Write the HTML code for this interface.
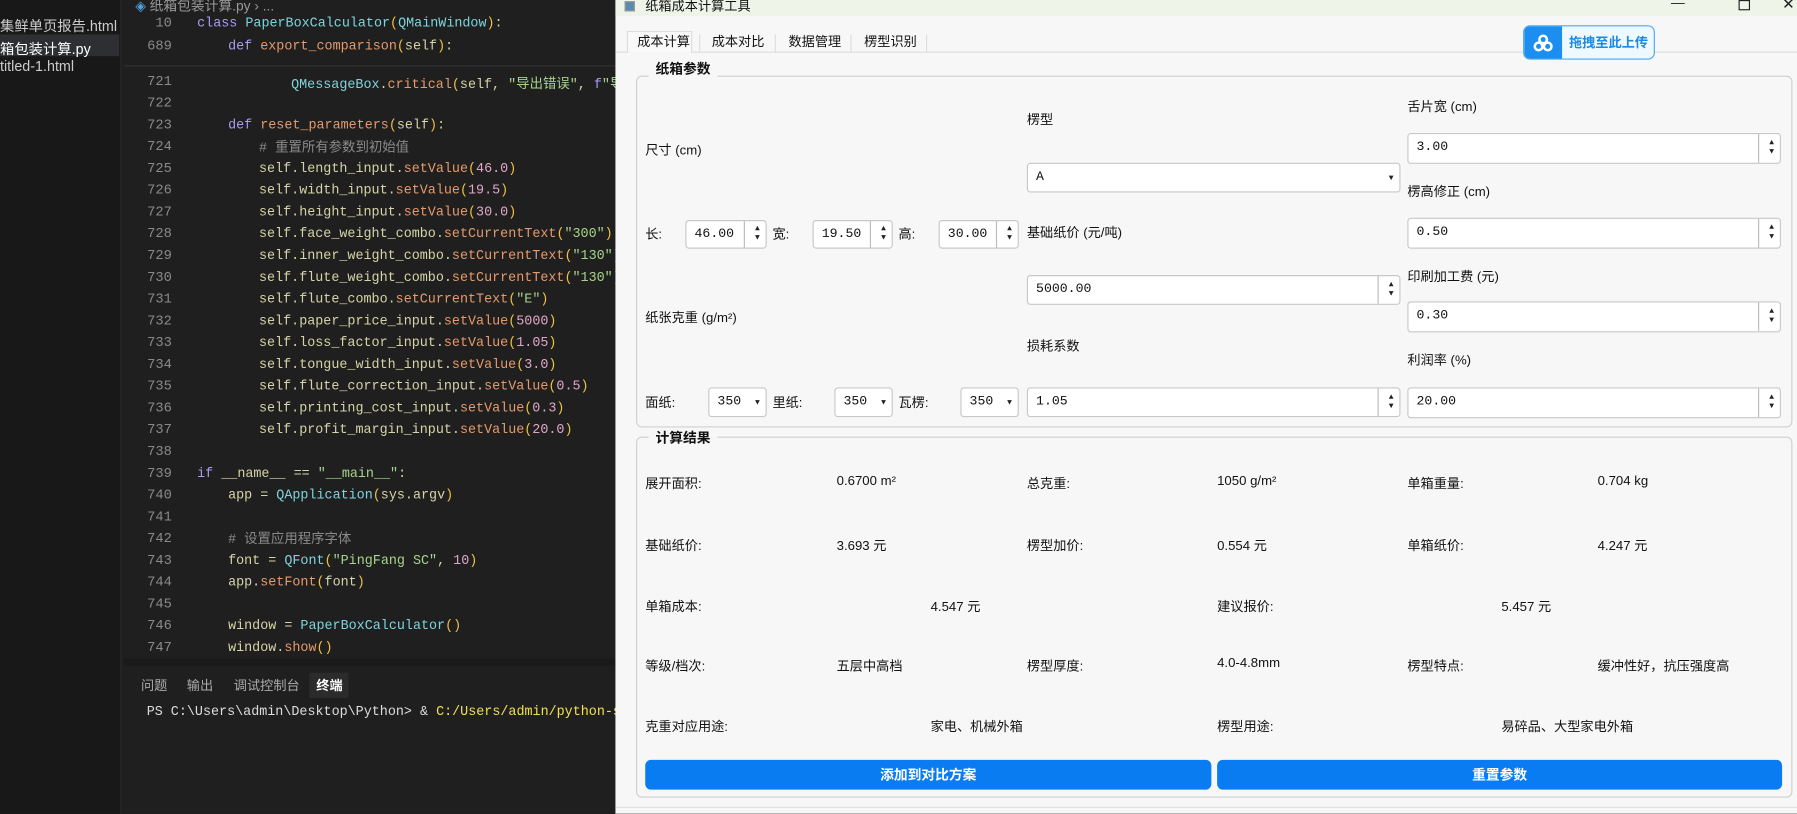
<!DOCTYPE html>
<html><head><meta charset="utf-8">
<style>
*{margin:0;padding:0;box-sizing:border-box}
html,body{width:1797px;height:814px;overflow:hidden;background:#1f1f1f}
#w{position:absolute;left:0;top:0;width:1568px;height:710px;transform:scale(1.14605);transform-origin:0 0;font-family:"Liberation Sans","Noto Sans CJK SC",sans-serif}
.a{position:absolute;white-space:nowrap}
#side{left:0;top:0;width:106px;height:710px;background:#181818;border-right:1px solid #2a2a2a}
.sf{font-size:12.5px;color:#cccccc;left:0}
#ed{left:106px;top:0;width:431px;height:710px;background:#1f1f1f}
.ln{font-family:"Liberation Mono",monospace;font-size:12px;color:#8a8a8a;width:44px;text-align:right;left:106px}
.cd{font-family:"Liberation Mono","Noto Sans CJK SC",monospace;font-size:11.7px;color:#d4d4a8}
.k{color:#a99cf0}.c{color:#7fd4dc}.f{color:#e49a6c}.s{color:#a6d48a}.n{color:#e0a6c8}.p{color:#f0c040}.m{color:#8a8a8a}.v{color:#dcd89c}
#win{left:537px;top:0;width:1031px;height:710px;background:#f7f7f7}
.lb{font-size:11.5px;color:#111;font-family:"Liberation Sans","Noto Sans CJK SC",sans-serif}
.bx{position:absolute;background:#fff;border:1px solid #c8c8c8;border-radius:3px;font-family:"Liberation Mono",monospace;font-size:11.5px;color:#111;padding-left:7px;line-height:24px}
.sp::after{content:"";position:absolute;right:0;top:0;width:18px;height:100%;border-left:1px solid #bbb}
.ar{position:absolute;right:5px;font-size:7px;color:#222;line-height:8px}
.grp{position:absolute;border:1px solid #cfcfcf;border-radius:5px}
.gt{position:absolute;background:#f7f7f7;font-weight:bold;font-size:12px;padding:0 6px;color:#111}
.btn{position:absolute;background:#0a7cf2;border-radius:5px;color:#fff;font-weight:bold;font-size:12px;text-align:center;line-height:26px}
.tt{font-size:11.5px;color:#aaa;top:590px}
</style></head><body><div id="w">
<div id="side" class="a"></div>
<div class="a sf" style="top:12px">集鲜单页报告.html</div>
<div class="a" style="left:0;top:30px;width:104px;height:19px;background:#2e2f32"></div>
<div class="a sf" style="top:32px;color:#fff">箱包装计算.py</div>
<div class="a sf" style="top:51px">titled-1.html</div>
<div id="ed" class="a"></div>
<div class="a" style="left:118px;top:-4px;font-size:12px;color:#999"><span style="color:#4aa0e0">◈</span> 纸箱包装计算.py › ...</div>
<div class="a" style="left:108px;top:57px;width:429px;height:1px;background:#333"></div>
<div class="a" style="left:108px;top:575px;width:429px;height:6px;background:#1a1a1a"></div>

<div class="a ln" style="top:13px">10</div><div class="a cd" style="left:172px;top:13px"><span class="k">class</span> <span class="c">PaperBoxCalculator</span><span class="p">(</span><span class="c">QMainWindow</span><span class="p">)</span>:</div>
<div class="a ln" style="top:33px">689</div><div class="a cd" style="left:199px;top:33px"><span class="k">def</span> <span class="f">export_comparison</span><span class="p">(</span>self<span class="p">)</span>:</div>
<div class="a ln" style="top:64px">721</div><div class="a cd" style="left:254px;top:64px"><span class="c">QMessageBox</span>.<span class="f">critical</span><span class="p">(</span>self, <span class="s">"导出错误"</span>, <span class="k">f</span><span class="s">"导</span></div>
<div class="a ln" style="top:83px">722</div>
<div class="a ln" style="top:102px">723</div><div class="a cd" style="left:199px;top:102px"><span class="k">def</span> <span class="f">reset_parameters</span><span class="p">(</span>self<span class="p">)</span>:</div>
<div class="a ln" style="top:121px">724</div><div class="a cd m" style="left:226px;top:119px"># 重置所有参数到初始值</div>
<div class="a ln" style="top:140px">725</div><div class="a cd" style="left:226px;top:140px">self.length_input.<span class="f">setValue</span><span class="p">(</span><span class="n">46.0</span><span class="p">)</span></div>
<div class="a ln" style="top:159px">726</div><div class="a cd" style="left:226px;top:159px">self.width_input.<span class="f">setValue</span><span class="p">(</span><span class="n">19.5</span><span class="p">)</span></div>
<div class="a ln" style="top:178px">727</div><div class="a cd" style="left:226px;top:178px">self.height_input.<span class="f">setValue</span><span class="p">(</span><span class="n">30.0</span><span class="p">)</span></div>
<div class="a ln" style="top:197px">728</div><div class="a cd" style="left:226px;top:197px">self.face_weight_combo.<span class="f">setCurrentText</span><span class="p">(</span><span class="s">"300"</span><span class="p">)</span></div>
<div class="a ln" style="top:216px">729</div><div class="a cd" style="left:226px;top:216px">self.inner_weight_combo.<span class="f">setCurrentText</span><span class="p">(</span><span class="s">"130"</span><span class="p">)</span></div>
<div class="a ln" style="top:235px">730</div><div class="a cd" style="left:226px;top:235px">self.flute_weight_combo.<span class="f">setCurrentText</span><span class="p">(</span><span class="s">"130"</span><span class="p">)</span></div>
<div class="a ln" style="top:254px">731</div><div class="a cd" style="left:226px;top:254px">self.flute_combo.<span class="f">setCurrentText</span><span class="p">(</span><span class="s">"E"</span><span class="p">)</span></div>
<div class="a ln" style="top:273px">732</div><div class="a cd" style="left:226px;top:273px">self.paper_price_input.<span class="f">setValue</span><span class="p">(</span><span class="n">5000</span><span class="p">)</span></div>
<div class="a ln" style="top:292px">733</div><div class="a cd" style="left:226px;top:292px">self.loss_factor_input.<span class="f">setValue</span><span class="p">(</span><span class="n">1.05</span><span class="p">)</span></div>
<div class="a ln" style="top:311px">734</div><div class="a cd" style="left:226px;top:311px">self.tongue_width_input.<span class="f">setValue</span><span class="p">(</span><span class="n">3.0</span><span class="p">)</span></div>
<div class="a ln" style="top:330px">735</div><div class="a cd" style="left:226px;top:330px">self.flute_correction_input.<span class="f">setValue</span><span class="p">(</span><span class="n">0.5</span><span class="p">)</span></div>
<div class="a ln" style="top:349px">736</div><div class="a cd" style="left:226px;top:349px">self.printing_cost_input.<span class="f">setValue</span><span class="p">(</span><span class="n">0.3</span><span class="p">)</span></div>
<div class="a ln" style="top:368px">737</div><div class="a cd" style="left:226px;top:368px">self.profit_margin_input.<span class="f">setValue</span><span class="p">(</span><span class="n">20.0</span><span class="p">)</span></div>
<div class="a ln" style="top:387px">738</div>
<div class="a ln" style="top:406px">739</div><div class="a cd" style="left:172px;top:406px"><span class="k">if</span> __name__ == <span class="s">"__main__"</span>:</div>
<div class="a ln" style="top:425px">740</div><div class="a cd" style="left:199px;top:425px">app = <span class="c">QApplication</span><span class="p">(</span>sys.argv<span class="p">)</span></div>
<div class="a ln" style="top:444px">741</div>
<div class="a ln" style="top:463px">742</div><div class="a cd m" style="left:199px;top:461px"># 设置应用程序字体</div>
<div class="a ln" style="top:482px">743</div><div class="a cd" style="left:199px;top:482px">font = <span class="c">QFont</span><span class="p">(</span><span class="s">"PingFang SC"</span>, <span class="n">10</span><span class="p">)</span></div>
<div class="a ln" style="top:501px">744</div><div class="a cd" style="left:199px;top:501px">app.<span class="f">setFont</span><span class="p">(</span>font<span class="p">)</span></div>
<div class="a ln" style="top:520px">745</div>
<div class="a ln" style="top:539px">746</div><div class="a cd" style="left:199px;top:539px">window = <span class="c">PaperBoxCalculator</span><span class="p">()</span></div>
<div class="a ln" style="top:558px">747</div><div class="a cd" style="left:199px;top:558px">window.<span class="f">show</span><span class="p">()</span></div>
<div class="a" style="left:270px;top:587px;width:34px;height:22px;background:#2b2b2b"></div>
<div class="a tt" style="left:123px">问题</div>
<div class="a tt" style="left:163px">输出</div>
<div class="a tt" style="left:204px">调试控制台</div>
<div class="a tt" style="left:276px;color:#fff;font-weight:bold">终端</div>
<div class="a cd" style="left:128px;top:614px;color:#ddd">PS C:\Users\admin\Desktop\Python&gt; &amp; <span style="color:#f0e050">C:/Users/admin/python-s</span></div>

<div id="win" class="a"></div>
<div class="a" style="left:537px;top:0;width:1031px;height:14px;background:#eef4e8"></div>
<div class="a" style="left:545px;top:1px;width:9px;height:9px;background:#5a8ab0;border:1px solid #999"></div>
<div class="a lb" style="left:563px;top:-3px">纸箱成本计算工具</div>
<div class="a" style="left:1458px;top:-5px;font-size:12px;color:#222">—</div>
<div class="a" style="left:1517px;top:0;width:10px;height:9px;border:1.5px solid #222"></div>
<div class="a" style="left:1555px;top:-4px;font-size:13px;color:#222">✕</div>
<div class="a" style="left:537px;top:45px;width:1031px;height:1px;background:#ddd"></div>
<div class="a" style="left:547px;top:27px;width:57px;height:19px;background:#f9f9f9;border:1px solid #ddd;border-bottom:none"></div>
<div class="a lb" style="left:556px;top:28px">成本计算</div>
<div class="a lb" style="left:621px;top:28px">成本对比</div>
<div class="a lb" style="left:688px;top:28px">数据管理</div>
<div class="a lb" style="left:754px;top:28px">楞型识别</div>
<div class="a" style="left:610px;top:30px;width:1px;height:16px;background:#ddd"></div>
<div class="a" style="left:676px;top:30px;width:1px;height:16px;background:#ddd"></div>
<div class="a" style="left:742px;top:30px;width:1px;height:16px;background:#ddd"></div>
<div class="a" style="left:808px;top:30px;width:1px;height:16px;background:#ddd"></div>
<div class="a" style="left:1329px;top:22px;width:115px;height:30px;border:1px solid #4aa8ec;border-radius:6px;background:#eef8ff;overflow:hidden">
<div class="a" style="left:0;top:0;width:33px;height:30px;background:#1b8ef0"></div>
<svg class="a" style="left:8px;top:7px" width="17" height="15" viewBox="0 0 17 15"><g fill="none" stroke="#fff" stroke-width="2.2"><circle cx="8.5" cy="4.5" r="3.3"/><circle cx="4.5" cy="10.5" r="3.3"/><circle cx="12.5" cy="10.5" r="3.3"/></g></svg>
<div class="a" style="left:39px;top:6px;font-size:11.5px;font-weight:bold;color:#1b8ae0">拖拽至此上传</div></div>

<div class="grp" style="left:555px;top:66px;width:1009px;height:307px"></div>
<div class="gt" style="left:566px;top:51px">纸箱参数</div>
<div class="a lb" style="left:563px;top:123px">尺寸 (cm)</div>
<div class="a lb" style="left:896px;top:96px">楞型</div>
<div class="bx" style="left:896px;top:142px;width:326px;height:26px">A<span class="ar" style="top:9px">▼</span></div>
<div class="a lb" style="left:563px;top:196px">长:</div>
<div class="bx sp" style="left:598px;top:192px;width:71px;height:25px">46.00<span class="ar" style="top:3px">▲<br>▼</span></div>
<div class="a lb" style="left:674px;top:196px">宽:</div>
<div class="bx sp" style="left:709px;top:192px;width:70px;height:25px">19.50<span class="ar" style="top:3px">▲<br>▼</span></div>
<div class="a lb" style="left:784px;top:196px">高:</div>
<div class="bx sp" style="left:819px;top:192px;width:70px;height:25px">30.00<span class="ar" style="top:3px">▲<br>▼</span></div>
<div class="a lb" style="left:896px;top:195px">基础纸价 (元/吨)</div>
<div class="bx sp" style="left:896px;top:240px;width:326px;height:26px">5000.00<span class="ar" style="top:4px">▲<br>▼</span></div>
<div class="a lb" style="left:563px;top:269px">纸张克重 (g/m²)</div>
<div class="a lb" style="left:896px;top:294px">损耗系数</div>
<div class="a lb" style="left:563px;top:343px">面纸:</div>
<div class="bx" style="left:618px;top:338px;width:51px;height:26px">350<span class="ar" style="top:9px">▼</span></div>
<div class="a lb" style="left:674px;top:343px">里纸:</div>
<div class="bx" style="left:728px;top:338px;width:51px;height:26px">350<span class="ar" style="top:9px">▼</span></div>
<div class="a lb" style="left:784px;top:343px">瓦楞:</div>
<div class="bx" style="left:838px;top:338px;width:51px;height:26px">350<span class="ar" style="top:9px">▼</span></div>
<div class="bx sp" style="left:896px;top:338px;width:326px;height:26px">1.05<span class="ar" style="top:4px">▲<br>▼</span></div>
<div class="a lb" style="left:1228px;top:85px">舌片宽 (cm)</div>
<div class="bx sp" style="left:1228px;top:116px;width:326px;height:27px">3.00<span class="ar" style="top:4px">▲<br>▼</span></div>
<div class="a lb" style="left:1228px;top:159px">楞高修正 (cm)</div>
<div class="bx sp" style="left:1228px;top:190px;width:326px;height:27px">0.50<span class="ar" style="top:4px">▲<br>▼</span></div>
<div class="a lb" style="left:1228px;top:233px">印刷加工费 (元)</div>
<div class="bx sp" style="left:1228px;top:263px;width:326px;height:27px">0.30<span class="ar" style="top:4px">▲<br>▼</span></div>
<div class="a lb" style="left:1228px;top:306px">利润率 (%)</div>
<div class="bx sp" style="left:1228px;top:338px;width:326px;height:27px">20.00<span class="ar" style="top:4px">▲<br>▼</span></div>

<div class="grp" style="left:555px;top:381px;width:1009px;height:315px"></div>
<div class="gt" style="left:566px;top:373px">计算结果</div>
<div class="a lb" style="left:563px;top:414px">展开面积:</div><div class="a lb" style="left:730px;top:414px">0.6700 m²</div>
<div class="a lb" style="left:896px;top:414px">总克重:</div><div class="a lb" style="left:1062px;top:414px">1050 g/m²</div>
<div class="a lb" style="left:1228px;top:414px">单箱重量:</div><div class="a lb" style="left:1394px;top:414px">0.704 kg</div>
<div class="a lb" style="left:563px;top:468px">基础纸价:</div><div class="a lb" style="left:730px;top:468px">3.693 元</div>
<div class="a lb" style="left:896px;top:468px">楞型加价:</div><div class="a lb" style="left:1062px;top:468px">0.554 元</div>
<div class="a lb" style="left:1228px;top:468px">单箱纸价:</div><div class="a lb" style="left:1394px;top:468px">4.247 元</div>
<div class="a lb" style="left:563px;top:521px">单箱成本:</div><div class="a lb" style="left:812px;top:521px">4.547 元</div>
<div class="a lb" style="left:1062px;top:521px">建议报价:</div><div class="a lb" style="left:1310px;top:521px">5.457 元</div>
<div class="a lb" style="left:563px;top:573px">等级/档次:</div><div class="a lb" style="left:730px;top:573px">五层中高档</div>
<div class="a lb" style="left:896px;top:573px">楞型厚度:</div><div class="a lb" style="left:1062px;top:573px">4.0-4.8mm</div>
<div class="a lb" style="left:1228px;top:573px">楞型特点:</div><div class="a lb" style="left:1394px;top:573px">缓冲性好，抗压强度高</div>
<div class="a lb" style="left:563px;top:626px">克重对应用途:</div><div class="a lb" style="left:812px;top:626px">家电、机械外箱</div>
<div class="a lb" style="left:1062px;top:626px">楞型用途:</div><div class="a lb" style="left:1310px;top:626px">易碎品、大型家电外箱</div>
<div class="btn" style="left:563px;top:663px;width:494px;height:26px">添加到对比方案</div>
<div class="btn" style="left:1062px;top:663px;width:493px;height:26px">重置参数</div>
<div class="a" style="left:537px;top:704px;width:1031px;height:1px;background:#e0e0e0"></div>
</div></body></html>
